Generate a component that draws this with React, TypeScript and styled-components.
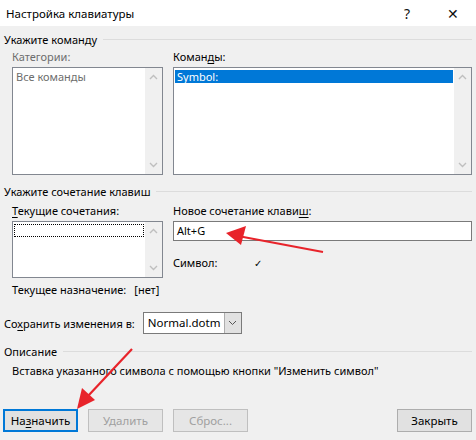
import styled, { createGlobalStyle } from "styled-components";

const Global = createGlobalStyle`
  html, body { margin: 0; padding: 0; background: #f0f0f0; }
  body { font-family: "Noto Sans", "Open Sans", sans-serif; font-size: 11px; color: #000; }
  * { box-sizing: border-box; }
`;

const Dialog = styled.div`
  position: relative;
  width: 476px;
  height: 440px;
  background: #f0f0f0;
  overflow: hidden;
`;

const TitleBar = styled.div`
  height: 26px;
  background: #fff;
  display: flex;
  align-items: center;
  padding-left: 6px;
  font-size: 11.5px;
`;

const TitleText = styled.span`
  flex: 1;
`;

const TitleButton = styled.span`
  width: 46px;
  text-align: center;
  font-size: 14px;
  color: #111;
`;

const Body = styled.div`
  padding: 0 4px;
`;

const Legend = styled.div<{ $top: number }>`
  display: flex;
  align-items: center;
  gap: 6px;
  margin-top: ${(p) => p.$top}px;
  height: 16px;
  white-space: nowrap;
  &::after {
    content: "";
    flex: 1;
    height: 1px;
    background: #dcdcdc;
  }
`;

const Columns = styled.div<{ $top: number }>`
  display: grid;
  grid-template-columns: 151px 299px;
  column-gap: 10px;
  padding-left: 8px;
  margin-top: ${(p) => p.$top}px;
`;

const Col = styled.div`
  display: flex;
  flex-direction: column;
`;

const Label = styled.div<{ $disabled?: boolean }>`
  height: 16px;
  line-height: 16px;
  white-space: nowrap;
  color: ${(p) => (p.$disabled ? "#6d6d6d" : "#000")};
  margin-bottom: 2px;
  u { text-decoration-thickness: 1px; text-underline-offset: 2px; }
`;

const ListBox = styled.div<{ $h: number }>`
  height: ${(p) => p.$h}px;
  background: #fff;
  border: 1px solid #828790;
  display: flex;
`;

const ListItems = styled.div`
  flex: 1;
  padding: 1px;
`;

const Item = styled.div<{ $selected?: boolean; $muted?: boolean; $focus?: boolean }>`
  height: 13px;
  line-height: 13px;
  padding-left: 2px;
  background: ${(p) => (p.$selected ? "#0078d7" : "transparent")};
  color: ${(p) => (p.$selected ? "#fff" : p.$muted ? "#6d6d6d" : "#000")};
  border: ${(p) => (p.$focus ? "1px dotted #000" : "none")};
  margin-top: 1px;
`;

const ScrollBar = styled.div`
  width: 17px;
  background: #f0f0f0;
  display: flex;
  flex-direction: column;
  justify-content: space-between;
  align-items: center;
  padding: 6px 0;
`;

const Chevron = ({ down }: { down?: boolean }) => (
  <svg width="9" height="6" viewBox="0 0 9 6">
    <path
      d={down ? "M1 1 L4.5 4.5 L8 1" : "M1 5 L4.5 1.5 L8 5"}
      fill="none"
      stroke="#bfbfbf"
      strokeWidth="1.4"
    />
  </svg>
);

const TextInput = styled.div`
  height: 20px;
  background: #fff;
  border: 1px solid #7a7a7a;
  padding-left: 3px;
  line-height: 18px;
`;

const Line = styled.div<{ $top: number }>`
  margin-top: ${(p) => p.$top}px;
  height: 16px;
  line-height: 16px;
  display: flex;
  white-space: nowrap;
`;

const Check = styled.span`
  margin-left: 37px;
  font-size: 10px;
`;

const Nothing = styled.span`
  margin-left: 8px;
`;

const SaveRow = styled.div`
  display: flex;
  align-items: center;
  margin-top: 14px;
  height: 22px;
  white-space: nowrap;
  u { text-decoration-thickness: 1px; text-underline-offset: 2px; }
`;

const Select = styled.div`
  margin-left: 8px;
  width: 99px;
  height: 22px;
  border: 1px solid #7a7a7a;
  background: #fff;
  display: flex;
`;

const SelectText = styled.span`
  flex: 1;
  padding-left: 4px;
  line-height: 20px;
  font-size: 11.5px;
`;

const SelectButton = styled.span`
  width: 17px;
  background: #e1e1e1;
  border-left: 1px solid #adadad;
  display: flex;
  align-items: center;
  justify-content: center;
`;

const Description = styled.div`
  margin-top: 4px;
  padding-left: 8px;
  height: 16px;
  line-height: 16px;
  white-space: nowrap;
`;

const Buttons = styled.div`
  display: flex;
  margin-top: 30px;
  padding: 0 4px 0 3px;
  gap: 10px;
`;

const Button = styled.div<{ $default?: boolean; $disabled?: boolean; $push?: boolean }>`
  width: 75px;
  height: 23px;
  display: flex;
  align-items: center;
  justify-content: center;
  font-size: 11.5px;
  background: ${(p) => (p.$disabled ? "#e6e6e6" : "#e1e1e1")};
  color: ${(p) => (p.$disabled ? "#a0a0a0" : "#000")};
  border: ${(p) =>
    p.$default ? "2px solid #0078d7" : p.$disabled ? "1px solid #bfbfbf" : "1px solid #adadad"};
  margin-left: ${(p) => (p.$push ? "auto" : "0")};
  u { text-decoration-thickness: 1px; text-underline-offset: 2px; }
`;

const Arrows = styled.svg`
  position: absolute;
  left: 0;
  top: 0;
  pointer-events: none;
`;

export default function App() {
  return (
    <>
      <Global />
      <Dialog>
        <TitleBar>
          <TitleText>Настройка клавиатуры</TitleText>
          <TitleButton>?</TitleButton>
          <TitleButton>✕</TitleButton>
        </TitleBar>
        <Body>
          <Legend $top={5}>Укажите команду</Legend>
          <Columns $top={2}>
            <Col>
              <Label $disabled>Категории:</Label>
              <ListBox $h={108}>
                <ListItems>
                  <Item $muted>Все команды</Item>
                </ListItems>
                <ScrollBar>
                  <Chevron />
                  <Chevron down />
                </ScrollBar>
              </ListBox>
            </Col>
            <Col>
              <Label>
                Коман<u>д</u>ы:
              </Label>
              <ListBox $h={108}>
                <ListItems>
                  <Item $selected>Symbol:</Item>
                </ListItems>
                <ScrollBar>
                  <Chevron />
                  <Chevron down />
                </ScrollBar>
              </ListBox>
            </Col>
          </Columns>
          <Legend $top={8}>Укажите сочетание клавиш</Legend>
          <Columns $top={4}>
            <Col>
              <Label>
                <u>Т</u>екущие сочетания:
              </Label>
              <ListBox $h={57}>
                <ListItems>
                  <Item $focus />
                </ListItems>
                <ScrollBar>
                  <Chevron />
                  <Chevron down />
                </ScrollBar>
              </ListBox>
              <Line $top={4}>
                Текущее назначение:<Nothing>[нет]</Nothing>
              </Line>
            </Col>
            <Col>
              <Label>
                Новое сочетание клави<u>ш</u>:
              </Label>
              <TextInput>Alt+G</TextInput>
              <Line $top={14}>
                Символ:<Check>✓</Check>
              </Line>
            </Col>
          </Columns>
          <SaveRow>
            <span>
              Со<u>х</u>ранить изменения в:
            </span>
            <Select>
              <SelectText>Normal.dotm</SelectText>
              <SelectButton>
                <svg width="9" height="6" viewBox="0 0 9 6">
                  <path d="M1 1 L4.5 4.5 L8 1" fill="none" stroke="#555" strokeWidth="1" />
                </svg>
              </SelectButton>
            </Select>
          </SaveRow>
          <Legend $top={9}>Описание</Legend>
          <Description>Вставка указанного символа с помощью кнопки "Изменить символ"</Description>
        </Body>
        <Buttons>
          <Button $default>
            На<u>з</u>начить
          </Button>
          <Button $disabled>Удалить</Button>
          <Button $disabled>Сброс...</Button>
          <Button $push>Закрыть</Button>
        </Buttons>
        <Arrows width="476" height="440" viewBox="0 0 476 440">
          <line x1="323" y1="252" x2="238" y2="236" stroke="#e8232a" strokeWidth="2.2" />
          <polygon points="226,233 246,226 241,245" fill="#e8232a" />
          <line x1="132" y1="349" x2="88" y2="396" stroke="#e8232a" strokeWidth="2.2" />
          <polygon points="77,409 82,388 95,400" fill="#e8232a" />
        </Arrows>
      </Dialog>
    </>
  );
}
